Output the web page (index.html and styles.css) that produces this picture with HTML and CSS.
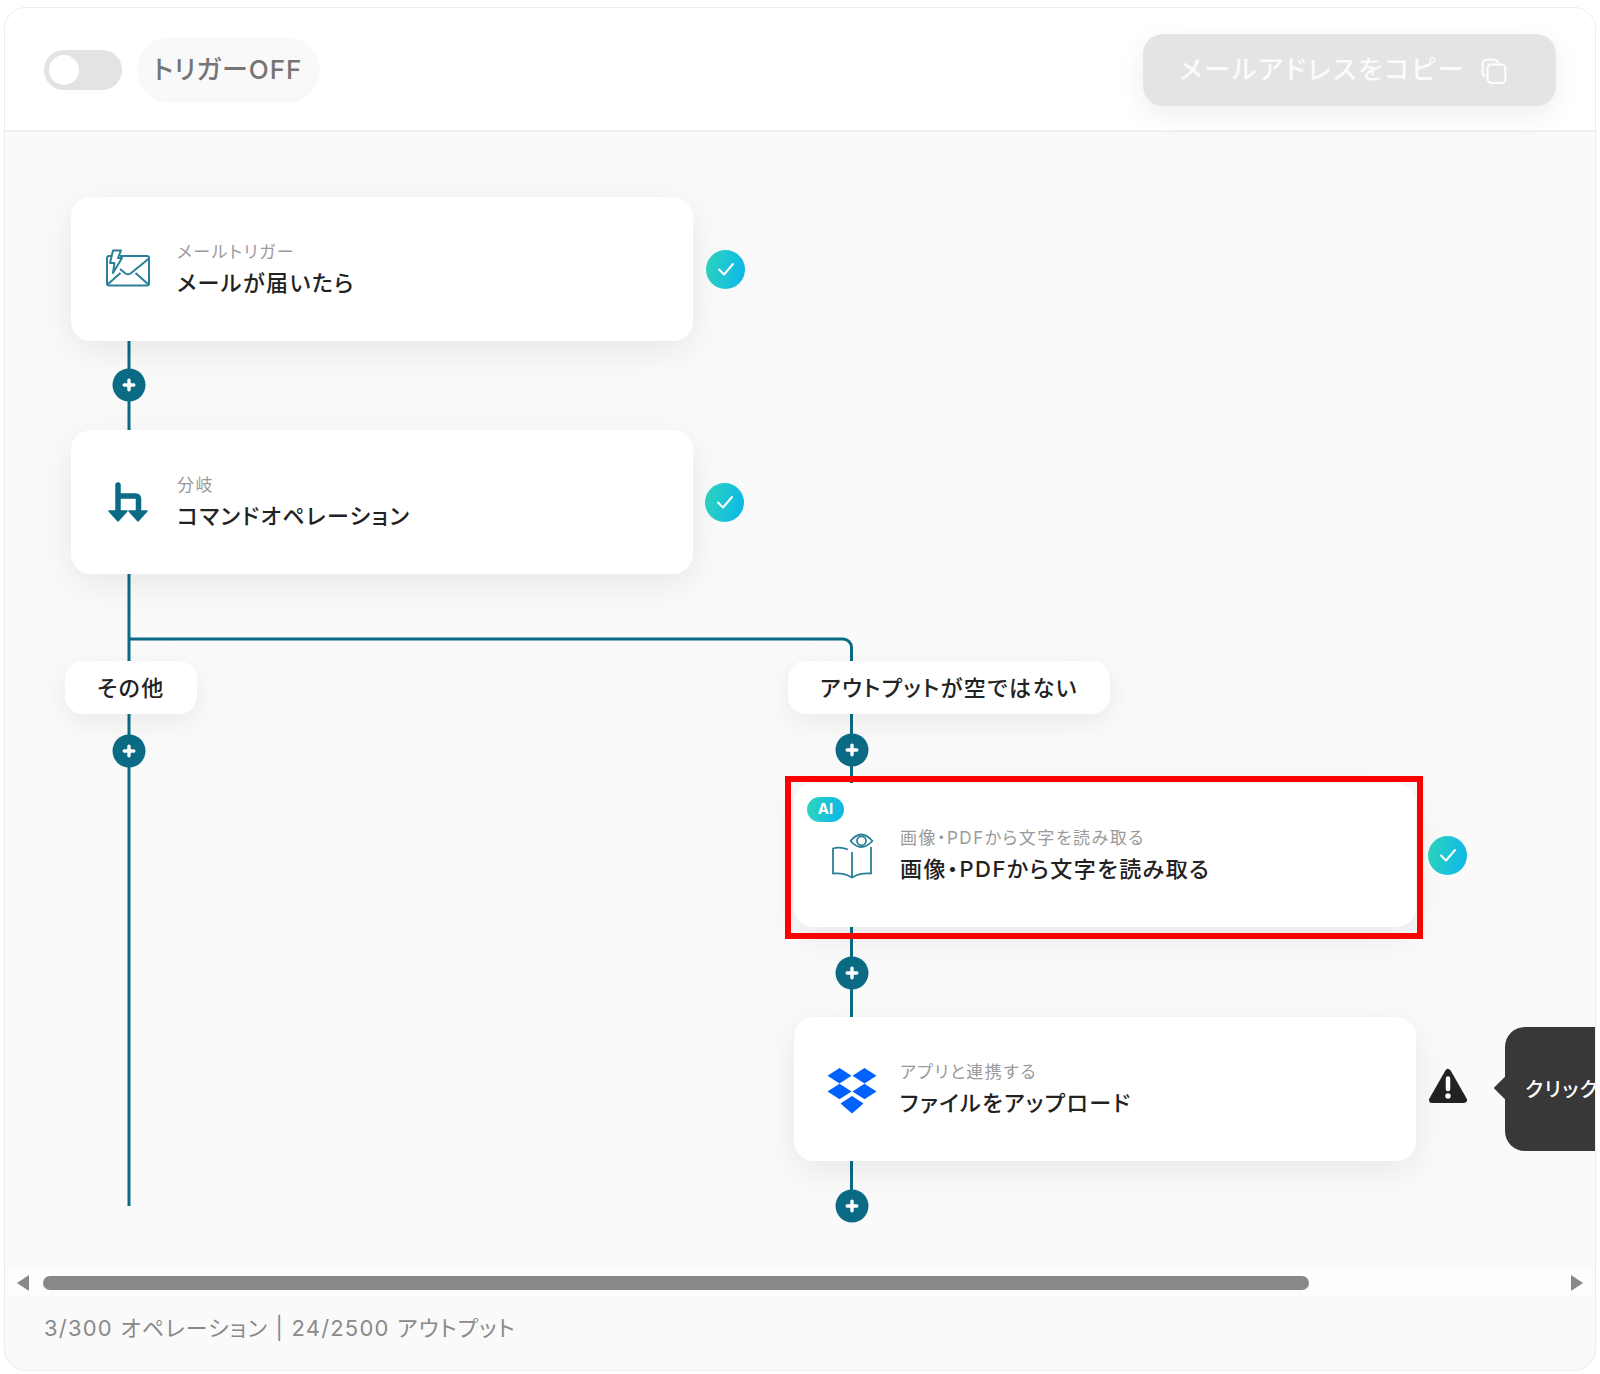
FILE: index.html
```html
<!DOCTYPE html>
<html lang="ja">
<head>
<meta charset="utf-8">
<title>フロー</title>
<link rel="stylesheet" href="styles.css">
</head>
<body>
<main class="shell">
  <header class="topbar">
    <div class="trigger">
      <span class="toggle"><span class="knob"></span></span>
      <span class="trigger-label">トリガーOFF</span>
    </div>
    <button class="copy-btn" type="button">
      <span>メールアドレスをコピー</span>
      <svg class="copy-icon" viewBox="0 0 24 24" fill="none" stroke="#fff" stroke-width="1.8">
        <path d="M4 17A3.500 3.500 0 0 1 1.500 13.500V5A3.500 3.500 0 0 1 5 1.500H12A3.500 3.500 0 0 1 15.500 4.500"/>
        <rect x="6" y="6" width="16.500" height="17" rx="3.500"/>
      </svg>
    </button>
  </header>

  <section class="canvas">
    <svg class="wires" viewBox="5 132 1590 1138" fill="none">
      <defs>
        <g id="plus">
          <circle r="16.500" fill="#0b6b85"/>
          <path d="M-4.800 0H4.800M0 -4.800V4.800" stroke="#fff" stroke-width="3.400" stroke-linecap="round"/>
        </g>
      </defs>
      <g stroke="#0b6b85" stroke-width="3">
        <path d="M129 341V431M129 574V1206"/>
        <path d="M129 639H843A8.500 8.500 0 0 1 851.500 647.500V670M851.500 714V790M851.500 926V1020M851.500 1161V1206"/>
      </g>
      <use href="#plus" x="129" y="385"/>
      <use href="#plus" x="129" y="751"/>
      <use href="#plus" x="852" y="750"/>
      <use href="#plus" x="852" y="973"/>
      <use href="#plus" x="852" y="1206"/>
    </svg>

    <div class="step step-mail">
      <article class="card">
        <svg class="icon" viewBox="0 0 46 40" fill="none" stroke="#2b8098" stroke-width="2" stroke-linejoin="round">
          <path d="M7 7H4A2 2 0 0 0 2 9V34.500A2 2 0 0 0 4 36.500H42A2 2 0 0 0 44 34.500V9A2 2 0 0 0 42 7H15"/>
          <path d="M8 1.500H16L13 9H17L8 24L9.500 14H5Z"/>
          <path d="M44 9.500 25.500 24.500Q23 26 20.500 24.500L15 20M2.500 35.500 15.500 24M43.500 35.500 30.500 24"/>
        </svg>
        <div class="text"><span class="sub">メールトリガー</span><strong class="title">メールが届いたら</strong></div>
      </article>
      <span class="check"><svg viewBox="0 0 20 20" fill="none" stroke="#fff" stroke-width="2" stroke-linecap="round" stroke-linejoin="round"><path d="M3 10.500 8 15.500 17 5"/></svg></span>
    </div>

    <div class="step step-branch">
      <article class="card">
        <svg class="icon" viewBox="0 0 46 40" fill="none" stroke="#0b6b85" stroke-width="5.500" stroke-linecap="round">
          <path d="M13 3V30M13 14H31A2.500 2.500 0 0 1 33.500 16.500V30"/>
          <path d="M4 29H22L13 39ZM24 29H42L33 39Z" fill="#0b6b85" stroke-width="1.500" stroke-linejoin="round"/>
        </svg>
        <div class="text"><span class="sub">分岐</span><strong class="title">コマンドオペレーション</strong></div>
      </article>
      <span class="check"><svg viewBox="0 0 20 20" fill="none" stroke="#fff" stroke-width="2" stroke-linecap="round" stroke-linejoin="round"><path d="M3 10.500 8 15.500 17 5"/></svg></span>
    </div>

    <div class="branch-label label-other">その他</div>
    <div class="branch-label label-output">アウトプットが空ではない</div>

    <div class="step step-ocr">
      <article class="card">
        <span class="ai">AI</span>
        <svg class="icon" viewBox="0 0 46 48" fill="none" stroke="#2b8098" stroke-width="1.800" stroke-linejoin="round">
          <path d="M17 18.500Q9 15.500 2 17.500V42.500Q13 41.500 21 46.500Q29 41.500 40 42.500V16"/>
          <path d="M21 21V46.500"/>
          <path d="M19.500 10Q30 -3 41.500 10Q30 22 19.500 10Z"/>
          <circle cx="30.500" cy="9.800" r="4.500"/>
        </svg>
        <div class="text"><span class="sub">画像・PDFから文字を読み取る</span><strong class="title">画像・PDFから文字を読み取る</strong></div>
      </article>
      <span class="check"><svg viewBox="0 0 20 20" fill="none" stroke="#fff" stroke-width="2" stroke-linecap="round" stroke-linejoin="round"><path d="M3 10.500 8 15.500 17 5"/></svg></span>
    </div>
    <div class="highlight"></div>

    <div class="step step-dropbox">
      <article class="card">
        <svg class="icon" viewBox="0 0 50 46" fill="#0061ff">
          <path d="M12.500 0 24.500 7.800 12.500 15.500 0.500 7.800ZM37.500 0 49.500 7.800 37.500 15.500 25.500 7.800ZM12.500 15.800 24.500 23.500 12.500 31.200 0.500 23.500ZM37.500 15.800 49.500 23.500 37.500 31.200 25.500 23.500ZM25 28 36.500 35.500 25 45.500 13.500 35.500Z"/>
        </svg>
        <div class="text"><span class="sub">アプリと連携する</span><strong class="title">ファイルをアップロード</strong></div>
      </article>
      <svg class="warn" viewBox="0 0 40 36">
        <path d="M20 4 36 32H4Z" fill="#222" stroke="#222" stroke-width="6" stroke-linejoin="round"/>
        <path d="M20 10.500V21" stroke="#fff" stroke-width="4.500" stroke-linecap="round"/>
        <circle cx="20" cy="28" r="2.700" fill="#fff"/>
      </svg>
      <div class="tip">クリック</div>
    </div>
  </section>

  <div class="scrollbar">
    <span class="arrow arrow-left"></span>
    <div class="track"><span class="thumb"></span></div>
    <span class="arrow arrow-right"></span>
  </div>
  <footer class="usage">3/300 オペレーション | 24/2500 アウトプット</footer>
</main>
</body>
</html>
```

FILE: styles.css
```css
* { box-sizing: border-box; }
html, body { margin: 0; background: #fff; }
body {
  padding: 7px 4px 3px 4px;
  height: 1374px;
  overflow: hidden;
  font-family: "Inter", "Noto Sans CJK JP", "Noto Sans", sans-serif;
  font-feature-settings: "palt";
  letter-spacing: 1.5px;
}
.shell {
  height: 1364px;
  display: flex;
  flex-direction: column;
  border: 1px solid #ececec;
  border-radius: 22px;
  overflow: hidden;
  background: #fafafa;
}
.topbar {
  flex: none;
  height: 124px;
  display: flex;
  align-items: center;
  justify-content: space-between;
  padding: 2px 39px 0 39px;
  background: #fff;
  border-bottom: 2px solid #f1f1f1;
}
.trigger { display: flex; align-items: center; gap: 15px; }
.toggle {
  width: 78px;
  height: 40px;
  padding: 5px;
  border-radius: 20px;
  background: #e3e3e3;
  display: block;
}
.knob { display: block; width: 30px; height: 30px; border-radius: 50%; background: #fff; }
.trigger-label {
  height: 66px;
  padding: 0 18px 5px 16px;
  display: flex;
  align-items: center;
  border-radius: 33px;
  background: #f9f9f9;
  color: #757575;
  font-size: 26px;
  font-weight: 500;
  letter-spacing: 1px;
}
.copy-btn {
  width: 413px;
  height: 72px;
  display: flex;
  align-items: center;
  justify-content: center;
  gap: 15px;
  padding: 0 13px 5px 0;
  border: 0;
  border-radius: 20px;
  background: #e4e4e4;
  color: #fbfbfb;
  font: 500 26px "Noto Sans CJK JP", sans-serif;
  font-feature-settings: "palt";
  letter-spacing: 2.2px;
  box-shadow: 0 8px 28px rgba(0, 0, 0, .07);
}
.copy-icon { width: 26px; height: 26px; margin-top: 7px; }

.canvas { position: relative; flex: none; height: 1138px; overflow: hidden; }
.wires { position: absolute; left: 0; top: 0; width: 1590px; height: 1138px; }

.step { position: absolute; display: flex; align-items: center; gap: 12px; }
.step-mail { left: 66px; top: 65px; gap: 13px; }
.step-branch { left: 66px; top: 298px; }
.step-ocr { left: 789px; top: 651px; }
.step-dropbox { left: 789px; top: 885px; }
.card {
  position: relative;
  width: 622px;
  height: 144px;
  display: flex;
  align-items: center;
  border-radius: 20px;
  background: #fff;
  box-shadow: 0 10px 36px rgba(0, 0, 0, .08);
}
.icon { position: absolute; left: 34px; top: 50%; width: 46px; height: 40px; transform: translateY(-50%); }
.step-ocr .icon { left: 37px; width: 46px; height: 48px; }
.step-dropbox .icon { left: 33px; top: 74px; width: 50px; height: 46px; }
.text { margin-left: 106px; padding-bottom: 1px; display: flex; flex-direction: column; gap: 3px; }
.sub { color: #9a9a9a; font-size: 17px; line-height: 25px; }
.title { color: #222; font-size: 22px; line-height: 30px; font-weight: 500; }
.check {
  width: 39px;
  height: 39px;
  display: flex;
  align-items: center;
  justify-content: center;
  border-radius: 50%;
  background: linear-gradient(100deg, #2fd6bd, #0bb6ea);
}
.check svg { width: 20px; height: 20px; }
.ai {
  position: absolute;
  left: 13px;
  top: 14px;
  width: 37px;
  height: 25px;
  border-radius: 13px;
  background: linear-gradient(100deg, #2fd6bd, #0bb6ea);
  color: #fff;
  font: 700 15px/24px "Inter", sans-serif;
  letter-spacing: 0;
  text-align: center;
}
.warn { width: 40px; height: 36px; margin: -6px 0 0 0; }
.tip {
  position: absolute;
  left: 711px;
  top: 10px;
  width: 300px;
  height: 124px;
  display: flex;
  align-items: center;
  padding: 0 0 2px 20px;
  border-radius: 20px;
  background: #383838;
  color: #fff;
  font-size: 20px;
  font-weight: 500;
  white-space: nowrap;
}
.tip::before {
  content: "";
  position: absolute;
  left: -8px;
  top: 53px;
  width: 16px;
  height: 16px;
  background: #383838;
  transform: rotate(45deg);
}
.branch-label {
  position: absolute;
  top: 529px;
  height: 53px;
  display: flex;
  align-items: center;
  justify-content: center;
  padding-bottom: 4px;
  border-radius: 18px;
  background: #fff;
  color: #222;
  font-size: 22px;
  font-weight: 500;
  box-shadow: 0 8px 30px rgba(0, 0, 0, .07);
}
.label-other { left: 60px; width: 132px; }
.label-output { left: 783px; width: 322px; }
.highlight {
  position: absolute;
  left: 780px;
  top: 644px;
  width: 638px;
  height: 163px;
  border: 6px solid #ff0000;
}

.scrollbar {
  flex: none;
  height: 26px;
  display: flex;
  align-items: center;
  background: #fdfdfd;
  padding: 0 12px;
}
.arrow { width: 0; height: 0; border-style: solid; flex: none; }
.arrow-left { border-width: 8px 12px 8px 0; border-color: transparent #888 transparent transparent; }
.arrow-right { border-width: 8px 0 8px 12px; border-color: transparent transparent transparent #888; }
.track { flex: 1; padding: 0 14px; }
.thumb { display: block; width: 1266px; height: 14px; border-radius: 7px; background: #888; }
.usage {
  flex: 1;
  padding: 16px 0 0 39px;
  color: #8a8a8a;
  font-size: 22px;
  line-height: 32px;
  letter-spacing: 1.200px;
}
```
